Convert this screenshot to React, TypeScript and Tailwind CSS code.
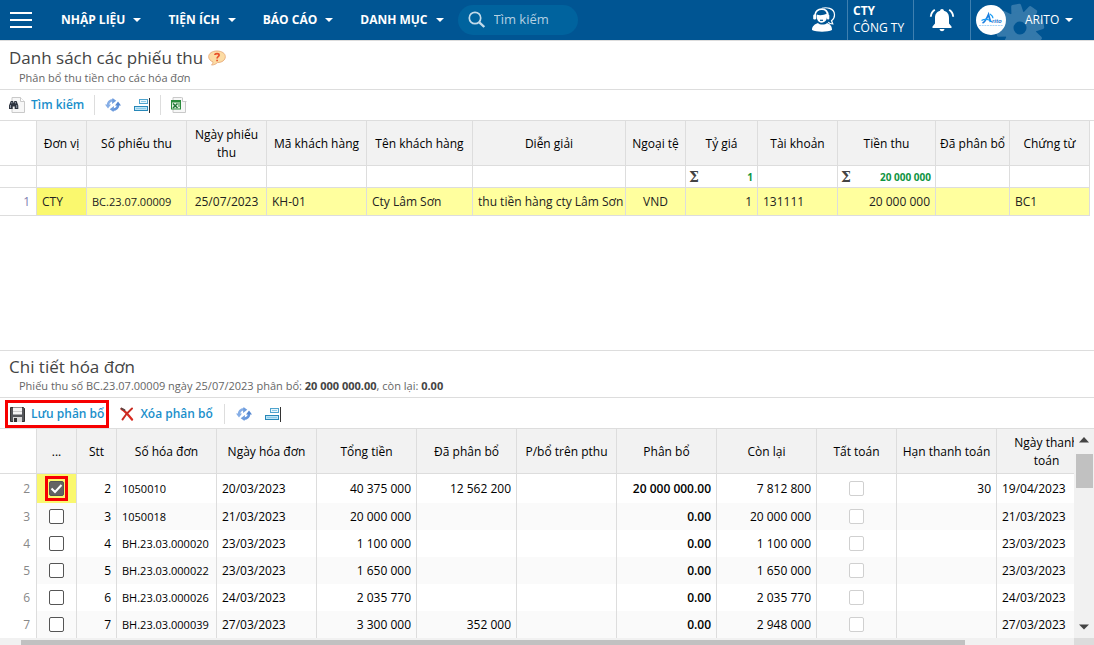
import React from "react";

type Align = "left" | "center" | "right";
interface Column {
  label: string;
  width: string;
  align: Align;
}

const alignClass: Record<Align, string> = {
  left: "text-left",
  center: "text-center",
  right: "text-right",
};

const menus = ["NHẬP LIỆU", "TIỆN ÍCH", "BÁO CÁO", "DANH MỤC"];

const receiptColumns: Column[] = [
  { label: "Đơn vị", width: "w-[50px]", align: "left" },
  { label: "Số phiếu thu", width: "w-[100px]", align: "left" },
  { label: "Ngày phiếu\nthu", width: "w-[80px]", align: "center" },
  { label: "Mã khách hàng", width: "w-[100px]", align: "left" },
  { label: "Tên khách hàng", width: "w-[106px]", align: "left" },
  { label: "Diễn giải", width: "w-[153px]", align: "left" },
  { label: "Ngoại tệ", width: "w-[60px]", align: "center" },
  { label: "Tỷ giá", width: "w-[72px]", align: "right" },
  { label: "Tài khoản", width: "w-[80px]", align: "left" },
  { label: "Tiền thu", width: "w-[98px]", align: "right" },
  { label: "Đã phân bổ", width: "w-[74px]", align: "left" },
  { label: "Chứng từ", width: "w-[80px]", align: "left" },
];

const receiptRow = [
  "CTY", "BC.23.07.00009", "25/07/2023", "KH-01", "Cty Lâm Sơn",
  "thu tiền hàng cty Lâm Sơn", "VND", "1", "131111", "20 000 000", "", "BC1",
];

const receiptTotals = ["", "", "", "", "", "", "", "1", "", "20 000 000", "", ""];

const invoiceColumns: Column[] = [
  { label: "...", width: "w-[40px]", align: "center" },
  { label: "Stt", width: "w-[40px]", align: "right" },
  { label: "Số hóa đơn", width: "w-[100px]", align: "left" },
  { label: "Ngày hóa đơn", width: "w-[100px]", align: "left" },
  { label: "Tổng tiền", width: "w-[100px]", align: "right" },
  { label: "Đã phân bổ", width: "w-[100px]", align: "right" },
  { label: "P/bổ trên pthu", width: "w-[100px]", align: "right" },
  { label: "Phân bổ", width: "w-[100px]", align: "right" },
  { label: "Còn lại", width: "w-[100px]", align: "right" },
  { label: "Tất toán", width: "w-[80px]", align: "center" },
  { label: "Hạn thanh toán", width: "w-[100px]", align: "right" },
  { label: "Ngày thanh\ntoán", width: "w-[100px]", align: "left" },
];

interface Invoice {
  id: number;
  code: string;
  date: string;
  total: string;
  paid: string;
  allocated: string;
  remaining: string;
  term: string;
  due: string;
}

const invoices: Invoice[] = [
  { id: 2, code: "1050010", date: "20/03/2023", total: "40 375 000", paid: "12 562 200", allocated: "20 000 000.00", remaining: "7 812 800", term: "30", due: "19/04/2023" },
  { id: 3, code: "1050018", date: "21/03/2023", total: "20 000 000", paid: "", allocated: "0.00", remaining: "20 000 000", term: "", due: "21/03/2023" },
  { id: 4, code: "BH.23.03.000020", date: "23/03/2023", total: "1 100 000", paid: "", allocated: "0.00", remaining: "1 100 000", term: "", due: "23/03/2023" },
  { id: 5, code: "BH.23.03.000022", date: "23/03/2023", total: "1 650 000", paid: "", allocated: "0.00", remaining: "1 650 000", term: "", due: "23/03/2023" },
  { id: 6, code: "BH.23.03.000026", date: "24/03/2023", total: "2 035 770", paid: "", allocated: "0.00", remaining: "2 035 770", term: "", due: "24/03/2023" },
  { id: 7, code: "BH.23.03.000039", date: "27/03/2023", total: "3 300 000", paid: "352 000", allocated: "0.00", remaining: "2 948 000", term: "", due: "27/03/2023" },
];

function Caret() {
  return (
    <svg width="8" height="4" viewBox="0 0 8 4" fill="#fff">
      <path d="M0 0h8L4 4z" />
    </svg>
  );
}

function SearchIcon() {
  return (
    <svg width="18" height="18" viewBox="0 0 18 18" fill="none" stroke="#c3dbea">
      <circle cx="7" cy="7" r="5.7" strokeWidth="1.7" />
      <path d="M11.3 11.3l5 4.7" strokeWidth="2.4" />
    </svg>
  );
}

function SupportIcon() {
  return (
    <svg width="26" height="26" viewBox="0 0 26 26" fill="none">
      <path d="M2 23c0-4 3-6 6-7 1.500 2 7.500 2 9 0 3 1 5 3 5 7-4 2.300-16 2.300-20 0z" fill="#fff" />
      <path d="M6.800 7.500c3 1.500 7.500.5 10-1 .8 3 .2 9-5 9.200-4.500-.2-5.500-4.700-5-8.200z" fill="#fff" />
      <path d="M5 8.500C5 4 8.500 2 12 2.200c3.500 0 6 2.300 5.700 6.300" stroke="#fff" strokeWidth="1.800" />
      <rect x="3.200" y="7.500" width="3" height="5" rx="1.300" fill="#fff" />
      <rect x="17" y="7.500" width="2.300" height="5" rx="1.100" fill="#fff" />
      <path d="M10 13.300h3" stroke="#005593" strokeWidth="1.200" />
      <path d="M12 1.300c4-1.200 12.300-.6 12.500 6.500.1 3.200-1.500 5-3 6l1.300 3.200c-2.500 0-3.800-.8-4.600-2" stroke="#fff" strokeWidth="1.200" />
    </svg>
  );
}

function BellIcon() {
  return (
    <svg width="26" height="24" viewBox="0 0 26 24">
      <path d="M13 1c1.200 0 1.800.8 1.900 1.800C18.500 3.700 20 6.500 20 10v5.500l2.500 3V20h-19v-1.500l2.500-3V10c0-3.500 1.500-6.300 5.100-7.200C11.200 1.800 11.800 1 13 1z" fill="#fff" />
      <path d="M10.500 21h5c-.4 1.500-1.300 2.200-2.500 2.200s-2.100-.7-2.500-2.200z" fill="#fff" />
      <path d="M5.800 1.800C3.300 3.500 2 5.700 1.800 8.700M20.200 1.800c2.500 1.700 3.800 3.900 4 6.900" stroke="#fff" strokeWidth="1.900" fill="none" />
    </svg>
  );
}

function Gear() {
  return (
    <svg width="50" height="40" viewBox="0 0 50 40" className="absolute left-[24px] top-0">
      <g fill="#3479ab">
        {[-10, 35, 80, 125, 170, 215, 260, 305].map((a) => (
          <path key={a} d="M18.500 16L20 5.500q.3-1.500 1.500-1.500h7q1.200 0 1.500 1.500L31.500 16z" transform={`rotate(${a} 25 28)`} />
        ))}
        <path fillRule="evenodd" d="M25 11.500a16.500 16.500 0 1 1 0 33 16.500 16.500 0 0 1 0-33zm0 10a6.500 6.500 0 1 0 0 13 6.500 6.500 0 0 0 0-13z" />
      </g>
    </svg>
  );
}

function Logo() {
  return (
    <span className="relative flex size-[30px] items-center justify-center rounded-full bg-white">
      <svg width="26" height="20" viewBox="0 0 26 20" fill="none">
        <path d="M4.500 13C7 12 9 8 10.500 4.500l2 7.500" stroke="#1b7fe0" strokeWidth="1.800" />
        <path d="M3.500 10.500c3-2 8-1.500 10.500 1.500M12 4c2 1.300 2.800 2.600 3 4.300" stroke="#1b9df5" strokeWidth="1.200" />
        <text x="14" y="12.500" fontSize="6" fontWeight="700" fontStyle="italic" fill="#1b74d0" fontFamily="Liberation Sans, sans-serif">rito</text>
        <path d="M1 15.500h24" stroke="#a8d4f7" strokeWidth="1" strokeDasharray="2 .7" />
      </svg>
    </span>
  );
}

function HelpIcon() {
  return (
    <svg width="18" height="16" viewBox="0 0 18 16">
      <path d="M9 1c4.700 0 8.300 2.300 8.300 5.700S14 12.500 9.500 12.600c-1.500 1.400-3.500 2.400-6 2.400 1-.9 1.500-2 1.500-3.100C2.400 11 .7 9 .7 6.700.7 3.300 4.300 1 9 1z" fill="#fcdca4" stroke="#eab183" strokeWidth="1" />
      <path d="M6.800 5c.2-1.700 4.300-1.900 4.300.2 0 1.500-2 1.500-2 3.200M9.100 9.700v1.500" stroke="#e8502a" strokeWidth="1.700" fill="none" />
    </svg>
  );
}

function Page({ x = 3 }: { x?: number }) {
  return (
    <>
      <path d={`M${x} .5h8.500l4 4v11H${x}z`} fill="#f7f7f7" stroke="#c9c9c9" />
      <path d="M11.500 .5v4h4" fill="#fff" stroke="#c9c9c9" />
    </>
  );
}

function FindIcon() {
  return (
    <svg width="16" height="16" viewBox="0 0 16 16">
      <Page />
      <path d="M1.800 4h2.400v1.500h1V4h2.400l1.700 4.500V12H5.700V9.500h-2V12H0V8.500z" fill="#2e3540" />
      <path d="M1.500 8v3M7.700 8v3M2.800 5v1.500M6.500 5v1.500" stroke="#a9b3bf" strokeWidth=".8" />
    </svg>
  );
}

function ExcelIcon() {
  return (
    <svg width="16" height="16" viewBox="0 0 16 16">
      <Page x={2} />
      <rect x="0.500" y="3.500" width="9" height="8.500" fill="#e6f2e2" stroke="#2a8c3c" />
      <path d="M0 4.500h10" stroke="#2a8c3c" strokeWidth="2" />
      <path d="M2 6.500l4.500 4.500M6.500 6.500L2 11" stroke="#22763a" strokeWidth="1.500" />
      <path d="M7 7h2M7 9h2" stroke="#2a8c3c" />
    </svg>
  );
}

function RefreshIcon() {
  return (
    <svg width="16" height="14" viewBox="0 0 16 14" fill="none">
      <path d="M3 8C2.500 4.500 5 2.300 8 2.300" stroke="#86aee6" strokeWidth="2.600" />
      <path d="M7.500 0l3.800 2.800L7 6z" fill="#6f9ddd" />
      <path d="M0 6.500h6L3 10.500z" fill="#86aee6" />
      <path d="M13 6c.5 3.500-2 5.700-5 5.700" stroke="#6596dc" strokeWidth="2.600" />
      <path d="M8.500 14l-3.800-2.800L9 8z" fill="#6f9ddd" />
      <path d="M16 7.500h-6L13 3.500z" fill="#5587d0" />
    </svg>
  );
}

function RowsIcon() {
  return (
    <svg width="16" height="15" viewBox="0 0 16 15">
      <rect x="5.500" y="1.500" width="8" height="4" fill="#e9f6fc" stroke="#4fa3cd" />
      <rect x="0.500" y="8.500" width="13" height="4" fill="#bfe5f7" stroke="#2787b8" />
      <path d="M7 3.500h5M2 10.500h10" stroke="#8ccbe8" />
      <path d="M15.500 0v15" stroke="#333" />
    </svg>
  );
}

function SaveIcon() {
  return (
    <svg width="15" height="15" viewBox="0 0 15 15">
      <path d="M.5 .5h13l1 1v13H.5z" fill="#54565a" stroke="#333" />
      <rect x="3" y="0.500" width="9" height="7" fill="#f4f4f4" />
      <path d="M3 4.500h9" stroke="#ccc" />
      <rect x="3" y="10" width="9" height="5" fill="#d8d8d8" />
      <rect x="4" y="11" width="3" height="4" fill="#333" />
    </svg>
  );
}

function DeleteIcon() {
  return (
    <svg width="14" height="14" viewBox="0 0 14 14" fill="none" strokeLinecap="round">
      <path d="M1.500 2c2 1 6.500 5.500 10.500 10.500" stroke="#d92a20" strokeWidth="2.300" />
      <path d="M12 1.500C8 5 4.500 9 2.500 12.500" stroke="#c92a20" strokeWidth="2" />
      <path d="M1.500 1.500l3 1.500" stroke="#5d4543" strokeWidth="1.800" />
    </svg>
  );
}

function IconButton({ label, children }: { label: string; children: React.ReactNode }) {
  return (
    <button type="button" aria-label={label} className="flex size-4 items-center justify-center">
      {children}
    </button>
  );
}

function Divider() {
  return <span className="h-5 w-px bg-[#ddd]" />;
}

function HeaderCells({ columns }: { columns: Column[] }) {
  return (
    <tr className="h-[45px]">
      <th className="w-[37px] border-b border-r border-[#ddd] bg-white" />
      {columns.map((c) => (
        <th
          key={c.label}
          scope="col"
          className={
            "whitespace-pre border-b border-r border-[#ddd] bg-[#f2f2f2] px-0 pb-0 pt-[2px] text-center align-middle text-[12px] font-medium leading-[18px] text-black " +
            c.width
          }
        >
          {c.label}
        </th>
      ))}
    </tr>
  );
}

function ReceiptTable() {
  return (
    <table className="w-[1090px] table-fixed border-separate border-spacing-0 text-[12px] leading-4">
      <thead>
        <HeaderCells columns={receiptColumns} />
        <tr className="h-[22px]">
          <td className="border-b border-r border-[#ddd] p-0" />
          {receiptTotals.map((t, i) => (
            <td key={i} className="border-b border-r border-[#ddd] p-0">
              {t && (
                <div className="flex items-center justify-between pl-[3px] pr-1 text-[10px] font-bold text-[#0e9442]">
                  <span className="font-['DejaVu_Serif',serif] text-[14px] text-[#444]">Σ</span>
                  <span>{t}</span>
                </div>
              )}
            </td>
          ))}
        </tr>
      </thead>
      <tbody>
        <tr className="h-7">
          <td className="border-b border-r border-[#ddd] py-0 pl-0 pr-[6px] text-right text-[#8080b0]">1</td>
          {receiptRow.map((v, i) => (
            <td
              key={i}
              className={
                "whitespace-nowrap border-b border-r border-[#ddd] px-[5px] py-0 text-[#222] " +
                (i === 0 ? "bg-[#faf86e] " : "bg-[#ffff9e] ") +
                (i === 1 ? "text-[11px] " : "") +
                alignClass[receiptColumns[i].align]
              }
            >
              {v}
            </td>
          ))}
        </tr>
      </tbody>
    </table>
  );
}

function Tick({ label, checked, muted }: { label: string; checked?: boolean; muted?: boolean }) {
  return (
    <span className="relative mx-auto flex size-[15px]">
      <input
        type="checkbox"
        aria-label={label}
        defaultChecked={checked}
        disabled={muted}
        className={
          "size-[15px] appearance-none rounded-[2px] border bg-white checked:bg-[#636363] " +
          (muted ? "border-[#d0d0d0]" : "border-[#555]")
        }
      />
      {checked && (
        <>
          <svg width="15" height="15" viewBox="0 0 15 15" className="pointer-events-none absolute inset-0" fill="none" stroke="#fff" strokeWidth="2">
            <path d="M2.500 7.500l3.500 3.500 6.500-7" />
          </svg>
          <span className="pointer-events-none absolute -inset-x-1 -inset-y-[5px] border-3 border-[#f70000]" />
        </>
      )}
    </span>
  );
}

function InvoiceTable() {
  const base = "whitespace-nowrap border-r border-[#ddd] px-[5px] py-0 ";
  return (
    <table className="w-[1097px] table-fixed border-separate border-spacing-0 text-[12px] leading-4 text-black">
      <thead>
        <HeaderCells columns={invoiceColumns} />
      </thead>
      <tbody>
        {invoices.map((r, i) => (
          <tr key={r.id} className={(i === 0 ? "h-[29px] " : "h-[27px] ") + (i % 2 ? "bg-[#fafafa]" : "bg-white")}>
            <td className="border-r border-[#ddd] bg-white py-0 pl-0 pr-[6px] text-right text-[#888]">{r.id}</td>
            <td className={"border-r border-[#ddd] p-0 " + (i === 0 ? "bg-[#faf86e]" : "")}>
              <Tick label={"Chọn " + r.code} checked={i === 0} />
            </td>
            <td className={base + "text-right"}>{r.id}</td>
            <td className={base + "text-[11px]"}>{r.code}</td>
            <td className={base}>{r.date}</td>
            <td className={base + "text-right"}>{r.total}</td>
            <td className={base + "text-right"}>{r.paid}</td>
            <td className={base} />
            <td className={base + "text-right font-semibold"}>{r.allocated}</td>
            <td className={base + "text-right"}>{r.remaining}</td>
            <td className={base}>
              <Tick label={"Tất toán " + r.code} muted />
            </td>
            <td className={base + "text-right"}>{r.term}</td>
            <td className={base}>{r.due}</td>
          </tr>
        ))}
      </tbody>
    </table>
  );
}

export default function App() {
  return (
    <div className="flex h-screen flex-col overflow-hidden bg-white font-['Open_Sans','Noto_Sans',sans-serif] text-[12px]">
      <header className="flex h-10 shrink-0 items-center bg-[#005593] text-white">
        <button type="button" aria-label="Menu" className="ml-[10px] flex w-[22px] flex-col gap-[5px]">
          <span className="h-[2px] bg-white" />
          <span className="h-[2px] bg-white" />
          <span className="h-[2px] bg-white" />
        </button>
        <nav className="ml-[29px] flex gap-[27px]">
          {menus.map((m) => (
            <button key={m} type="button" className="flex items-center gap-2 text-[12px] font-bold leading-5">
              {m}
              <Caret />
            </button>
          ))}
        </nav>
        <label className="ml-[14px] flex h-[30px] w-[120px] items-center gap-2 rounded-full bg-[#00639e] pl-[10px]">
          <SearchIcon />
          <input type="text" aria-label="Tìm kiếm" placeholder="Tìm kiếm" className="w-[70px] bg-transparent text-[13px] outline-none placeholder:text-[#b3d0e2]" />
        </label>
        <div className="ml-auto flex h-full items-center">
          <button type="button" aria-label="Hỗ trợ" className="mr-[11px]">
            <SupportIcon />
          </button>
          <div className="flex h-full w-[66px] flex-col justify-center border-l border-[#3f80b0] pb-[2px] pl-[5px] text-[12px] leading-[17px]">
            <strong>CTY</strong>
            <span className="whitespace-nowrap">CÔNG TY</span>
          </div>
          <button type="button" aria-label="Thông báo" className="flex h-full w-[57px] items-center justify-center border-l border-[#3f80b0]">
            <BellIcon />
          </button>
          <button type="button" className="relative flex h-full w-[124px] items-center border-l border-[#3f80b0] pl-[5px]">
            <Gear />
            <Logo />
            <span className="relative ml-[19px] mr-[6px]">ARITO</span>
            <span className="relative"><Caret /></span>
          </button>
        </div>
      </header>

      <section className="flex h-[310px] shrink-0 flex-col border-t border-[#ddd]">
        <div className="h-12 shrink-0 pl-[9px] pt-[5px]">
          <h1 className="flex items-center gap-[5px] text-[17px] leading-6 text-[#444]">
            Danh sách các phiếu thu <HelpIcon />
          </h1>
          <p className="pl-[10px] text-[11px] leading-4 text-[#666]">Phân bổ thu tiền cho các hóa đơn</p>
        </div>
        <div className="flex h-8 shrink-0 items-center gap-[10px] border-y border-[#ddd] pl-[9px] text-[12px] font-semibold leading-4 text-[#1a8fcb]">
          <button type="button" className="flex items-center gap-[6px] whitespace-nowrap">
            <FindIcon />
            Tìm kiếm
          </button>
          <Divider />
          <div className="flex gap-[13px]">
            <IconButton label="Làm mới"><RefreshIcon /></IconButton>
            <IconButton label="Cố định cột"><RowsIcon /></IconButton>
          </div>
          <Divider />
          <IconButton label="Xuất Excel"><ExcelIcon /></IconButton>
        </div>
        <ReceiptTable />
      </section>

      <section className="flex min-h-0 flex-1 flex-col border-t border-[#ddd]">
        <div className="h-[46px] shrink-0 pl-[9px] pt-1">
          <h2 className="text-[17px] leading-6 text-[#444]">Chi tiết hóa đơn</h2>
          <p className="pl-[10px] text-[11px] leading-[14px] text-[#666]">
            Phiếu thu số BC.23.07.00009 ngày 25/07/2023 phân bổ: <b className="text-[#444]">20 000 000.00</b>, còn lại: <b className="text-[#444]">0.00</b>
          </p>
        </div>
        <div className="flex h-8 shrink-0 items-center gap-[11px] border-y border-[#ddd] pl-[5px] pt-[2px] text-[12px] font-semibold leading-4 text-[#1a8fcb]">
          <button type="button" className="flex h-7 items-center gap-[6px] whitespace-nowrap border-3 border-[#f70000] px-[2px]">
            <SaveIcon />
            Lưu phân bổ
          </button>
          <button type="button" className="flex items-center gap-[6px] whitespace-nowrap">
            <DeleteIcon />
            Xóa phân bổ
          </button>
          <Divider />
          <div className="flex gap-[13px]">
            <IconButton label="Làm mới"><RefreshIcon /></IconButton>
            <IconButton label="Cố định cột"><RowsIcon /></IconButton>
          </div>
        </div>
        <div className="flex min-h-0 flex-1">
          <div className="min-w-0 flex-1 overflow-hidden">
            <InvoiceTable />
          </div>
          <div className="flex w-5 flex-col items-center bg-[#f1f1f1] py-2">
            <svg width="10" height="6" viewBox="0 0 10 6" fill="#444"><path d="M0 5.500h10L5 0z" /></svg>
            <div className="mt-[11px] h-[34px] w-[17px] bg-[#c1c1c1]" />
            <svg width="10" height="6" viewBox="0 0 10 6" fill="#444" className="mt-auto"><path d="M0 .5h10L5 5.500z" /></svg>
          </div>
        </div>
        <div className="flex h-[7px] shrink-0 bg-[#f1f1f1] pl-[21px] pt-[2px]">
          <div className="w-[88%] bg-[#c1c1c1]" />
          <div className="-mt-[2px] ml-auto w-5 bg-[#dcdcdc]" />
        </div>
      </section>
    </div>
  );
}
